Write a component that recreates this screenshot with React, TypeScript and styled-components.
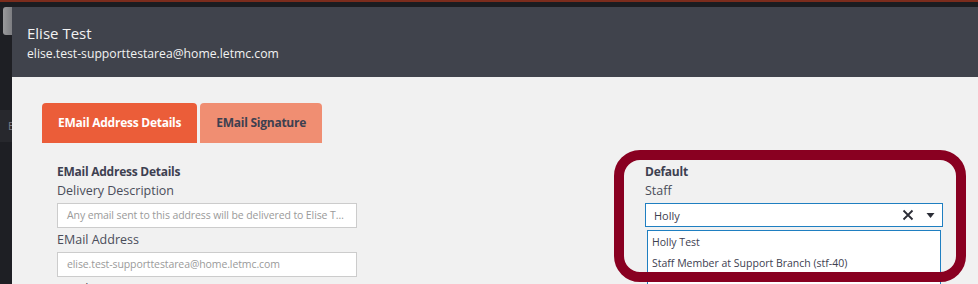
import React from 'react';
import styled, { createGlobalStyle } from 'styled-components';

const GlobalStyle = createGlobalStyle`
    html, body {
        margin: 0;
        padding: 0;
        background: #1e1f24;
        overflow: hidden;
    }
    * {
        box-sizing: border-box;
    }
`;

const Page = styled.div`
    width: 978px;
    height: 284px;
    display: flex;
    flex-direction: column;
    font-family: "Open Sans", "Noto Sans", sans-serif;
    overflow: hidden;
`;

const TopBar = styled.div`
    height: 7px;
    flex: none;
    background: #1b1c20;
    border-top: 2px solid #7b2c1c;
`;

const Stage = styled.div`
    flex: 1;
    display: flex;
    min-height: 0;
`;

const BackStrip = styled.div`
    width: 12px;
    flex: none;
    display: flex;
    flex-direction: column;
    background: #1e1f24;
`;

const ScrollThumb = styled.div`
    margin-left: 3px;
    height: 28px;
    border-radius: 3px 0 0 3px;
    background: linear-gradient(90deg, #9a9a9c, #7d7e82);
`;

const BackRow = styled.div`
    margin-top: 75px;
    height: 32px;
    background: #27282d;
    color: #7d7f8a;
    font-size: 11px;
    line-height: 32px;
    padding-left: 8px;
    overflow: hidden;
`;

const Modal = styled.div`
    flex: 1;
    display: flex;
    flex-direction: column;
    background: #f1f1f1;
`;

const ModalHeader = styled.header`
    height: 70px;
    flex: none;
    background: #40434c;
    color: #f2f2f2;
    padding: 16px 0 0 15px;
`;

const HeaderName = styled.div`
    font-size: 15px;
    line-height: 20px;
`;

const HeaderEmail = styled.div`
    font-size: 12.2px;
    line-height: 18px;
    margin-top: 2px;
`;

const ModalBody = styled.main`
    padding: 26px 0 0 30px;
`;

const Tabs = styled.div`
    display: flex;
    gap: 3px;
`;

const Tab = styled.div<{ active?: boolean }>`
    height: 40px;
    padding: 0 16px;
    border-radius: 4px 4px 0 0;
    background: ${(p) => (p.active ? '#eb5d39' : '#f08e72')};
    color: ${(p) => (p.active ? '#ffffff' : '#3d4050')};
    font-size: 12px;
    font-weight: 700;
    letter-spacing: -0.25px;
    line-height: 40px;
`;

const Form = styled.div`
    display: flex;
    padding: 19px 0 0 15px;
`;

const Column = styled.div<{ offset?: number }>`
    position: relative;
    width: ${(p) => (p.offset ? '298px' : '300px')};
    margin-left: ${(p) => (p.offset ? `${p.offset}px` : '0')};
    display: flex;
    flex-direction: column;
`;

const SectionTitle = styled.div`
    font-size: 12px;
    font-weight: 700;
    letter-spacing: -0.25px;
    line-height: 19px;
    color: #3d4050;
`;

const Label = styled.div<{ gap?: number }>`
    font-size: 12.5px;
    line-height: 19px;
    color: #4a4d5a;
    margin-top: ${(p) => p.gap ?? 0}px;
`;

const TextBox = styled.div`
    margin-top: 3px;
    height: 25px;
    background: #ffffff;
    border: 1px solid #cccccc;
    padding: 0 9px;
    font-size: 10.5px;
    letter-spacing: -0.1px;
    line-height: 23px;
    color: #9a9a9a;
    white-space: nowrap;
    overflow: hidden;
    text-overflow: ellipsis;
`;

const Select = styled.div`
    margin-top: 3px;
    height: 24px;
    background: #ffffff;
    border: 1px solid #1f7fc1;
    display: flex;
    align-items: center;
    padding: 0 7px 0 8px;
    font-size: 11px;
    color: #3d4050;
`;

const SelectValue = styled.div`
    flex: 1;
`;

const SelectIcons = styled.div`
    display: flex;
    align-items: center;
    gap: 12px;
`;

const Options = styled.div`
    margin: 3px 2px 0 2px;
    border: 1px solid #1f7fc1;
    border-bottom: none;
    background: #ffffff;
    padding-top: 1px;
    height: 60px;
`;

const Option = styled.div`
    height: 21px;
    padding-left: 4px;
    font-size: 10.5px;
    line-height: 21px;
    color: #3d4050;
`;

const Highlight = styled.div`
    position: absolute;
    left: -31px;
    top: -12px;
    width: 352px;
    height: 132px;
    border: 10px solid #890021;
    border-radius: 26px;
    pointer-events: none;
`;

function ClearIcon() {
    return (
        <svg width="12" height="12" viewBox="0 0 12 12">
            <path d="M1.5 1.5 L10.5 10.5 M10.5 1.5 L1.5 10.5" stroke="#2b2d36" strokeWidth="1.8" />
        </svg>
    );
}

function CaretIcon() {
    return (
        <svg width="9" height="8" viewBox="0 0 9 8">
            <path d="M0.5 2 L8.5 2 L4.5 7 Z" fill="#2b2d36" />
        </svg>
    );
}

export default function App() {
    return (
        <Page>
            <GlobalStyle />
            <TopBar />
            <Stage>
                <BackStrip>
                    <ScrollThumb />
                    <BackRow>E</BackRow>
                </BackStrip>
                <Modal>
                    <ModalHeader>
                        <HeaderName>Elise Test</HeaderName>
                        <HeaderEmail>elise.test-supporttestarea@home.letmc.com</HeaderEmail>
                    </ModalHeader>
                    <ModalBody>
                        <Tabs>
                            <Tab active>EMail Address Details</Tab>
                            <Tab>EMail Signature</Tab>
                        </Tabs>
                        <Form>
                            <Column>
                                <SectionTitle>EMail Address Details</SectionTitle>
                                <Label>Delivery Description</Label>
                                <TextBox>Any email sent to this address will be delivered to Elise Test</TextBox>
                                <Label gap={2}>EMail Address</Label>
                                <TextBox>elise.test-supporttestarea@home.letmc.com</TextBox>
                                <Label gap={2}>EMail Name</Label>
                            </Column>
                            <Column offset={288}>
                                <SectionTitle>Default</SectionTitle>
                                <Label>Staff</Label>
                                <Select>
                                    <SelectValue>Holly</SelectValue>
                                    <SelectIcons>
                                        <ClearIcon />
                                        <CaretIcon />
                                    </SelectIcons>
                                </Select>
                                <Options>
                                    <Option>Holly Test</Option>
                                    <Option>Staff Member at Support Branch (stf-40)</Option>
                                </Options>
                                <Highlight />
                            </Column>
                        </Form>
                    </ModalBody>
                </Modal>
            </Stage>
        </Page>
    );
}
